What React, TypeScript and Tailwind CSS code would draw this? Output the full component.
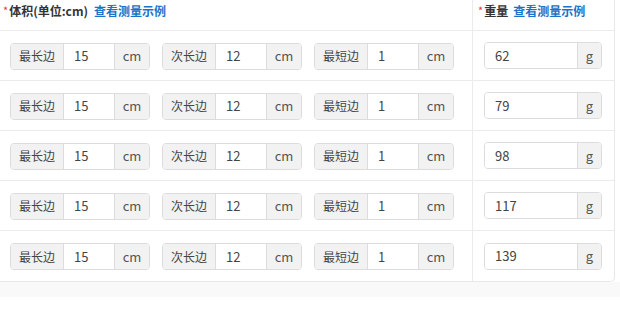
import React from 'react';

const rows = [
  { long: '15', mid: '12', short: '1', weight: '62' },
  { long: '15', mid: '12', short: '1', weight: '79' },
  { long: '15', mid: '12', short: '1', weight: '98' },
  { long: '15', mid: '12', short: '1', weight: '117' },
  { long: '15', mid: '12', short: '1', weight: '139' },
];

const font = { fontFamily: '"Microsoft YaHei", "Noto Sans CJK SC", "Noto Sans", sans-serif' };

const SizeInput: React.FC<{ label: string; value: string }> = ({ label, value }) => (
  <div className="flex h-[27px] w-[140px] rounded-[4px] border border-[#dcdcdc] overflow-hidden text-[12px] text-[#444]">
    <span className="w-[53px] flex items-center justify-center bg-[#f2f2f2] border-r border-[#dcdcdc]">{label}</span>
    <span className="w-[50px] flex items-center pl-[10px] bg-white text-[13px]">{value}</span>
    <span className="flex-1 flex items-center justify-center bg-[#f2f2f2] border-l border-[#dcdcdc] text-[#555] text-[13px]">cm</span>
  </div>
);

const WeightInput: React.FC<{ value: string }> = ({ value }) => (
  <div className="flex h-[27px] w-[118px] rounded-[4px] border border-[#dcdcdc] overflow-hidden text-[13px] text-[#444]">
    <span className="w-[92px] flex items-center pl-[10px] bg-white">{value}</span>
    <span className="flex-1 flex items-center justify-center bg-[#f2f2f2] border-l border-[#dcdcdc] text-[#555]">g</span>
  </div>
);

export default function App() {
  return (
    <div className="w-[620px] h-[320px] bg-white overflow-hidden" style={font}>
      <div className="w-[615px] border-r border-b border-[#e8e8e8] rounded-br-[5px] bg-white">
        <div className="grid grid-cols-[472px_1fr] h-[31px] border-b border-[#ebebeb]">
          <div className="flex items-center pl-[3px] pb-[9px] text-[12px] font-bold text-[#333]">
            <span className="text-[#e4393c] font-normal text-[11px] mr-[1px]">*</span>
            体积(单位:cm)
            <span className="ml-[6px] text-[#1a73c9]">查看测量示例</span>
          </div>
          <div className="flex items-center pl-[5px] pb-[9px] border-l border-[#ebebeb] text-[12px] font-bold text-[#333]">
            <span className="text-[#e4393c] font-normal text-[11px] mr-[1px]">*</span>
            重量
            <span className="ml-[5px] text-[#1a73c9]">查看测量示例</span>
          </div>
        </div>
        {rows.map((r, i) => (
          <div
            key={i}
            className={`grid grid-cols-[472px_1fr] h-[50px] ${i < rows.length - 1 ? 'border-b border-[#ebebeb]' : ''}`}
          >
            <div className="flex items-center gap-[12px] pl-[10px] pt-[1px]">
              <SizeInput label="最长边" value={r.long} />
              <SizeInput label="次长边" value={r.mid} />
              <SizeInput label="最短边" value={r.short} />
            </div>
            <div className="flex items-center pl-[11px] border-l border-[#ebebeb]">
              <WeightInput value={r.weight} />
            </div>
          </div>
        ))}
      </div>
      <div className="h-[15px] bg-[#f9f9f9]" />
    </div>
  );
}
